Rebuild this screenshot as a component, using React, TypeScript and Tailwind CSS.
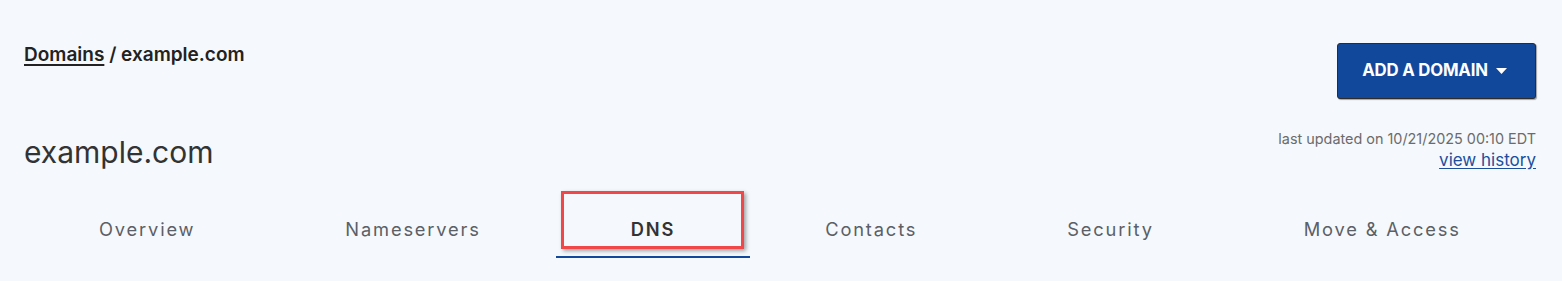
import React from 'react';

const tabs = ['Overview', 'Nameservers', 'DNS', 'Contacts', 'Security', 'Move & Access'];

function Caret() {
  return (
    <svg width="11" height="6" viewBox="0 0 11 6" className="ml-[8px]">
      <path d="M0 0h11L5.5 6z" fill="#fff" />
    </svg>
  );
}

export default function App() {
  const active = 'DNS';

  return (
    <div className="w-full h-[281px] bg-[#f5f8fc] pl-6 pr-[26px] font-['Inter',sans-serif] overflow-hidden">
      <div className="flex justify-between items-start pt-[43px]">
        <p className="mt-[1px] text-[19px] font-semibold text-[#222] leading-[22px]">
          <a className="underline underline-offset-[3px] decoration-[1.5px]">Domains</a> / example.com
        </p>
        <button className="h-[56px] w-[199px] flex items-center justify-center pr-[4px] rounded-[3px] bg-[#11489b] border border-[#2c2c2c] shadow-[1px_1px_1px_rgba(0,0,0,0.35)] text-white text-[16.8px] font-bold tracking-[-0.2px]">
          ADD A DOMAIN
          <Caret />
        </button>
      </div>

      <div className="flex justify-between items-start mt-[29px]">
        <h1 className="mt-[6px] text-[30px] font-normal text-[#333] leading-[36px]">example.com</h1>
        <div className="flex flex-col items-end mt-[2px]">
          <span className="text-[14.4px] text-[#6b6b6b] leading-[18px]">last updated on 10/21/2025 00:10 EDT</span>
          <a className="mt-[1px] text-[17px] text-[#1b4f9e] underline underline-offset-[2px] leading-[22px]">view history</a>
        </div>
      </div>

      <div className="flex mt-[34px]">
        {tabs.map((t) => (
          <div
            key={t}
            className={`relative shrink-0 whitespace-nowrap px-[75px] pt-[12px] pb-[15px] text-[18.3px] tracking-[0.1em] leading-[24px] border-b-2 ${
              t === active ? 'font-semibold text-[#333] border-[#11489b]' : 'text-[#5b5f66] border-transparent'
            }`}
          >
            {t}
            {t === active && (
              <span className="absolute left-[5px] right-[6px] top-[-14px] h-[58px] border-[3px] border-[#f04848] shadow-[2px_2px_4px_rgba(0,0,0,0.35)]" />
            )}
          </div>
        ))}
      </div>
    </div>
  );
}
